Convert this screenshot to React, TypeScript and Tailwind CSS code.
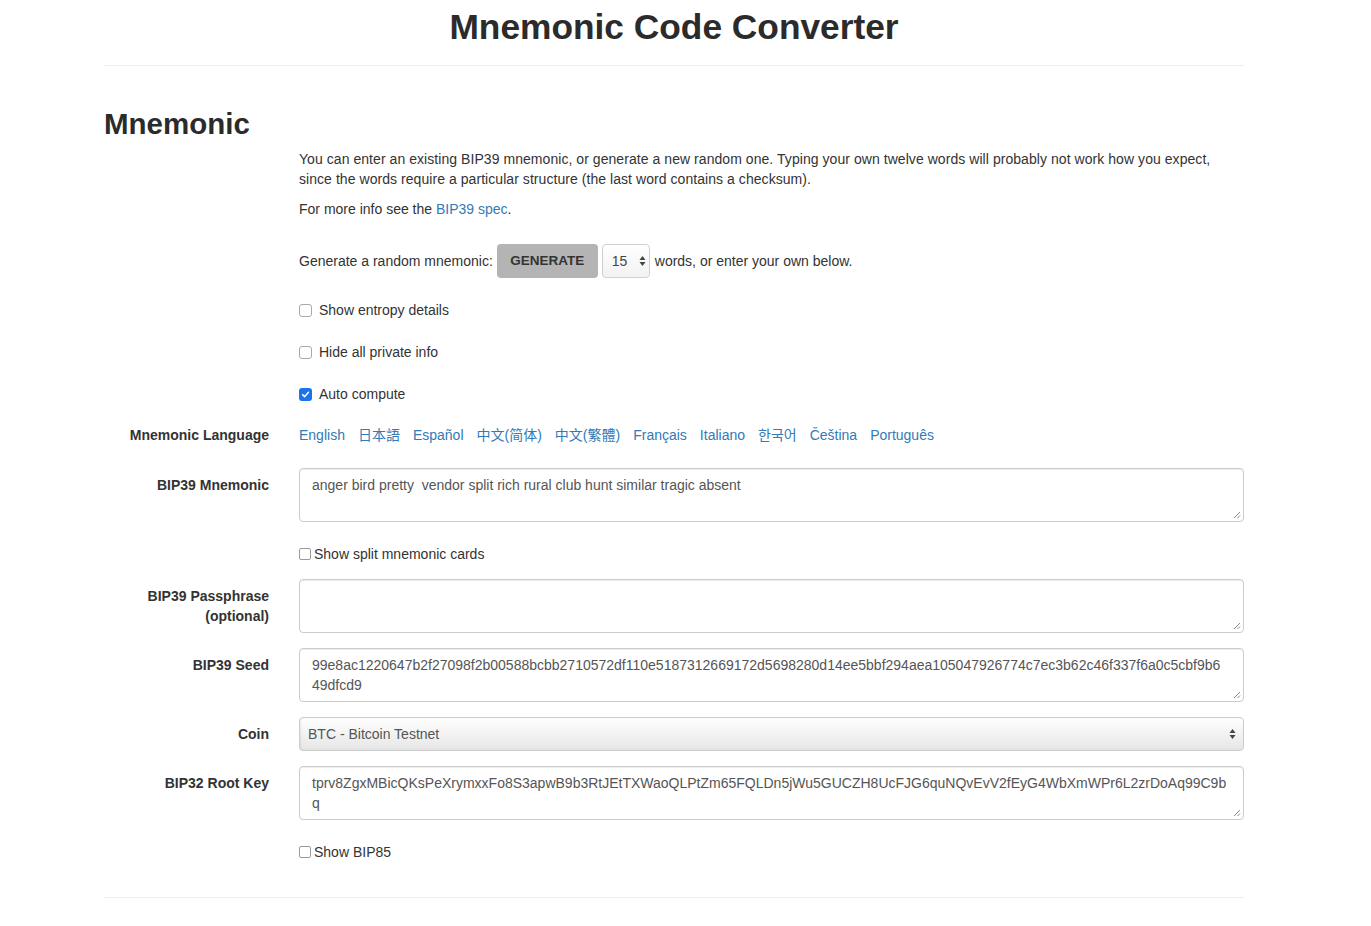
import React from "react";

const font = { fontFamily: '"Liberation Sans", Arial, "Noto Sans CJK SC", "Noto Sans CJK KR", sans-serif' };

function Box({ checked = false }: { checked?: boolean }) {
  if (checked) {
    return (
      <span className="inline-flex w-[13px] h-[13px] rounded-[3px] bg-[#1a73e8] items-center justify-center shrink-0">
        <svg width="9" height="9" viewBox="0 0 10 10">
          <path d="M1.8 5.2 L4 7.4 L8.3 2.6" stroke="white" strokeWidth="1.7" fill="none" strokeLinecap="round" strokeLinejoin="round" />
        </svg>
      </span>
    );
  }
  return <span className="inline-block w-[13px] h-[13px] rounded-[3px] border border-[#a9a9a9] bg-white shrink-0" />;
}

function SmallBox() {
  return <span className="inline-block w-[12px] h-[12px] rounded-[2px] border border-[#9a9a9a] bg-white shrink-0" />;
}

function Resize() {
  return (
    <svg className="absolute right-[2px] bottom-[2px]" width="9" height="9" viewBox="0 0 9 9">
      <path d="M8 2 L2 8 M8 5.5 L5.5 8" stroke="#8a8a8a" strokeWidth="1" />
    </svg>
  );
}

function Arrows({ className = "" }: { className?: string }) {
  return (
    <svg className={className} width="7" height="12" viewBox="0 0 7 12">
      <path d="M3.5 1 L6.5 5 L0.5 5 Z" fill="#444" />
      <path d="M3.5 11 L6.5 7 L0.5 7 Z" fill="#444" />
    </svg>
  );
}

function Label({ children }: { children: React.ReactNode }) {
  return <div className="w-[165px] shrink-0 text-right font-bold pt-[7px] leading-[20px]">{children}</div>;
}

function Area({ lines }: { lines: string[] }) {
  return (
    <div className="relative flex-1 h-[54px] border border-[#ccc] rounded-[4px] bg-white shadow-[inset_0_1px_1px_rgba(0,0,0,0.075)] px-[12px] py-[6px] text-[#555] whitespace-pre leading-[20px]">
      {lines.map((l, i) => (
        <div key={i}>{l}</div>
      ))}
      <Resize />
    </div>
  );
}

const langs = ["English", "日本語", "Español", "中文(简体)", "中文(繁體)", "Français", "Italiano", "한국어", "Čeština", "Português"];

export default function App() {
  return (
    <div className="min-h-screen bg-white text-[#333] text-[14px] leading-[20px]" style={font}>
      <div className="w-[1140px] ml-[104px]">
        <h1 className="text-center text-[35.3px] leading-[40px] font-bold pt-[7px] pb-[18px] text-[#2b2b2b]">Mnemonic Code Converter</h1>
        <div className="h-px bg-[#eee]" />
        <h2 className="text-[29.5px] leading-[33px] font-bold mt-[41px] text-[#2b2b2b]">Mnemonic</h2>
        <div className="ml-[195px] mt-[9px]">
          <p className="tracking-[0.004em]">
            You can enter an existing BIP39 mnemonic, or generate a new random one. Typing your own twelve words will probably not work how you expect,
            <br />
            since the words require a particular structure (the last word contains a checksum).
          </p>
          <p className="mt-[10px]">
            For more info see the <span className="text-[#337ab7]">BIP39 spec</span>.
          </p>
          <div className="flex items-center h-[34px] mt-[25px]">
            <span>Generate a random mnemonic:</span>
            <span className="ml-[4px] h-[34px] w-[101px] rounded-[4px] bg-[#b4b4b4] flex items-center justify-center font-bold text-[13.5px] text-[#333]">GENERATE</span>
            <span className="ml-[4px] h-[34px] w-[48px] rounded-[4px] border border-[#d0d0d0] bg-gradient-to-b from-white to-[#f2f2f2] flex items-center pl-[9px] text-[#444]">
              15
              <Arrows className="ml-[12px]" />
            </span>
            <span className="ml-[5px]">words, or enter your own below.</span>
          </div>
          <div className="flex items-center gap-[7px] mt-[22px]">
            <Box />
            <span>Show entropy details</span>
          </div>
          <div className="flex items-center gap-[7px] mt-[22px]">
            <Box />
            <span>Hide all private info</span>
          </div>
          <div className="flex items-center gap-[7px] mt-[22px]">
            <Box checked />
            <span>Auto compute</span>
          </div>
        </div>

        <div className="flex mt-[21px]">
          <div className="w-[165px] shrink-0 text-right font-bold">Mnemonic Language</div>
          <div className="ml-[30px] flex gap-[13px] text-[#337ab7]">
            {langs.map((l) => (
              <span key={l}>{l}</span>
            ))}
          </div>
        </div>

        <div className="flex gap-[30px] mt-[23px]">
          <Label>BIP39 Mnemonic</Label>
          <Area lines={["anger bird pretty  vendor split rich rural club hunt similar tragic absent"]} />
        </div>

        <div className="ml-[195px] mt-[22px] flex items-center gap-[3px]">
          <SmallBox />
          <span>Show split mnemonic cards</span>
        </div>

        <div className="flex gap-[30px] mt-[15px]">
          <Label>
            BIP39 Passphrase
            <br />
            (optional)
          </Label>
          <Area lines={[""]} />
        </div>

        <div className="flex gap-[30px] mt-[15px]">
          <Label>BIP39 Seed</Label>
          <Area
            lines={[
              "99e8ac1220647b2f27098f2b00588bcbb2710572df110e5187312669172d5698280d14ee5bbf294aea105047926774c7ec3b62c46f337f6a0c5cbf9b6",
              "49dfcd9",
            ]}
          />
        </div>

        <div className="flex gap-[30px] mt-[15px]">
          <Label>Coin</Label>
          <div className="flex-1 h-[34px] border border-[#ccc] rounded-[4px] bg-gradient-to-b from-white to-[#e6e6e6] shadow-[inset_1px_0_2px_rgba(0,0,0,0.08)] flex items-center pl-[8px] pr-[7px] text-[#555]">
            <span className="flex-1">BTC - Bitcoin Testnet</span>
            <Arrows />
          </div>
        </div>

        <div className="flex gap-[30px] mt-[15px]">
          <Label>BIP32 Root Key</Label>
          <Area lines={["tprv8ZgxMBicQKsPeXrymxxFo8S3apwB9b3RtJEtTXWaoQLPtZm65FQLDn5jWu5GUCZH8UcFJG6quNQvEvV2fEyG4WbXmWPr6L2zrDoAq99C9b", "q"]} />
        </div>

        <div className="ml-[195px] mt-[22px] flex items-center gap-[3px]">
          <SmallBox />
          <span>Show BIP85</span>
        </div>

        <div className="h-px bg-[#eee] mt-[35px]" />
        <div className="h-[28px]" />
      </div>
    </div>
  );
}
